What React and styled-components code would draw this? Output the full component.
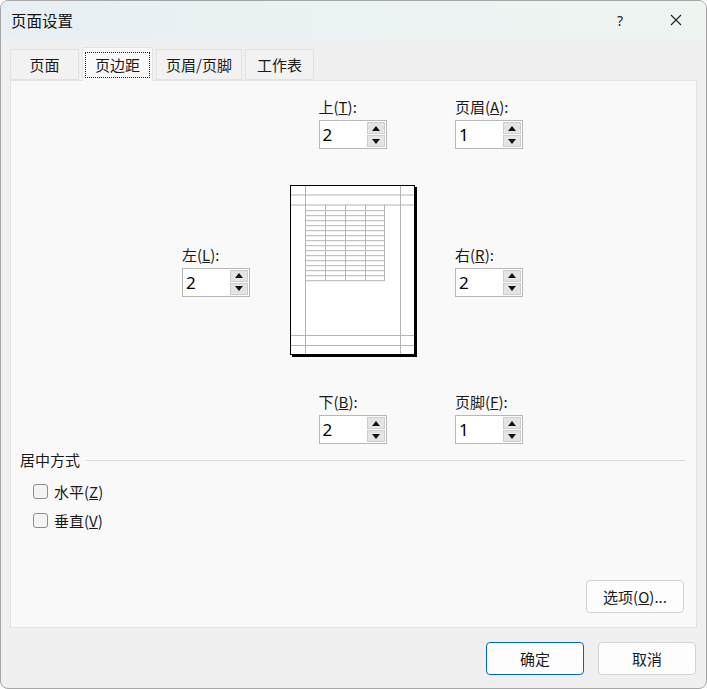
import styled, { createGlobalStyle } from "styled-components";

const Global = createGlobalStyle`
  html, body { margin: 0; padding: 0; background: #ffffff; }
  body { font-family: "Noto Sans CJK SC", "Noto Sans", sans-serif; color: #1a1a1a; }
`;

const Window = styled.div`
  width: 707px;
  height: 689px;
  box-sizing: border-box;
  border: 1px solid #a6a6a6;
  border-radius: 8px;
  overflow: hidden;
  background: #f0f0f0;
  display: flex;
  flex-direction: column;
  font-size: 15px;
`;

const TitleBar = styled.div`
  height: 38px;
  flex-shrink: 0;
  display: flex;
  align-items: center;
  padding: 0 2px 0 10px;
  background: linear-gradient(90deg, #e7eff4 0%, #ecf3f3 55%, #eef4f0 100%);
`;

const Title = styled.div`
  flex: 1;
  font-size: 15.5px;
  color: #111;
`;

const TitleButton = styled.div`
  width: 56px;
  height: 38px;
  display: flex;
  align-items: center;
  justify-content: center;
  font-family: "Noto Sans", sans-serif;
  font-size: 14px;
  color: #222;
`;

const TabStrip = styled.div`
  display: flex;
  align-items: flex-end;
  gap: 3px;
  padding: 9px 0 0 9px;
  height: 41px;
  box-sizing: border-box;
  position: relative;
  z-index: 1;
`;

const Tab = styled.div`
  width: ${(p) => p.$w}px;
  height: ${(p) => (p.$active ? 34 : 31)}px;
  box-sizing: border-box;
  display: flex;
  align-items: center;
  justify-content: center;
  border: 1px solid #e3e3e3;
  border-bottom: ${(p) => (p.$active ? "none" : "1px solid #e3e3e3")};
  background: ${(p) => (p.$active ? "#f9f9f9" : "#f2f2f2")};
  margin-bottom: ${(p) => (p.$active ? "-1px" : "0")};
  padding-top: ${(p) => (p.$active ? "1px" : "0")};
`;

const FocusBox = styled.span`
  border: 1px dotted #222;
  padding: 2px 9px;
  line-height: 20px;
`;

const Panel = styled.div`
  margin: 0 9px;
  height: 548px;
  box-sizing: border-box;
  border: 1px solid #e3e3e3;
  background: #f9f9f9;
  display: flex;
  flex-direction: column;
`;

const MarginGrid = styled.div`
  display: grid;
  grid-template-columns: 68px 125px 68px;
  column-gap: 40px;
  margin: 15px 0 0 171px;
`;

const Field = styled.div`
  display: flex;
  flex-direction: column;
  gap: 2px;
  grid-column: ${(p) => p.$col};
  justify-self: ${(p) => p.$justify || "start"};
  align-self: center;
  width: 68px;
`;

const Label = styled.label`
  line-height: 21px;
  white-space: nowrap;
`;

const Spin = styled.div`
  display: flex;
  height: 29px;
  margin-top: 1px;
  box-sizing: border-box;
  border: 1px solid #b7b7b7;
  background: #ffffff;
`;

const SpinValue = styled.div`
  flex: 1;
  padding-left: 3px;
  font-family: "Noto Sans", sans-serif;
  font-size: 17px;
  line-height: 27px;
  color: #000;
`;

const SpinButtons = styled.div`
  width: 18px;
  margin: 1px 1px 1px 0;
  display: flex;
  flex-direction: column;
  gap: 1px;
`;

const SpinButton = styled.div`
  flex: 1;
  background: #e4e4e4;
  border: 1px solid #cdcdcd;
  display: flex;
  align-items: center;
  justify-content: center;
  &::after {
    content: "";
    border-left: 4px solid transparent;
    border-right: 4px solid transparent;
    ${(p) => (p.$up ? "border-bottom: 5px solid #111;" : "border-top: 5px solid #111;")}
  }
`;

const PageCell = styled.div`
  grid-column: 2;
  margin: 36px 0 34px;
  width: 127px;
  height: 172px;
`;

const GroupHead = styled.div`
  display: flex;
  align-items: center;
  margin: 6px 11px 0 9px;
  line-height: 20px;
`;

const GroupRule = styled.div`
  flex: 1;
  height: 1px;
  background: #dcdcdc;
  margin-left: 6px;
`;

const CheckList = styled.div`
  display: flex;
  flex-direction: column;
  padding: 7px 0 0 22px;
`;

const CheckRow = styled.label`
  display: flex;
  align-items: center;
  gap: 6px;
  height: 29px;
`;

const Box = styled.span`
  width: 15px;
  height: 15px;
  box-sizing: border-box;
  border: 1px solid #8d8d8d;
  border-radius: 3px;
  background: #f4f4f4;
`;

const PanelFoot = styled.div`
  margin-top: auto;
  display: flex;
  justify-content: flex-end;
  padding: 0 12px 14px 0;
`;

const Button = styled.button`
  width: 98px;
  height: 33px;
  box-sizing: border-box;
  border: 1px solid ${(p) => (p.$primary ? "#0067c0" : "#d3d3d3")};
  border-radius: 4px;
  background: #fdfdfd;
  font-family: "Noto Sans CJK SC", "Noto Sans", sans-serif;
  font-size: 15px;
  color: #1a1a1a;
  padding: 0;
`;

const Footer = styled.div`
  display: flex;
  justify-content: flex-end;
  gap: 14px;
  padding: 14px 10px 0 0;
`;

const Spinner = ({ label, k, value, col, justify }) => (
  <Field $col={col} $justify={justify}>
    <Label>
      {label}(<u>{k}</u>):
    </Label>
    <Spin>
      <SpinValue>{value}</SpinValue>
      <SpinButtons>
        <SpinButton $up />
        <SpinButton />
      </SpinButtons>
    </Spin>
  </Field>
);

const PagePreview = () => {
  const rows = [];
  for (let i = 0; i < 15; i++) rows.push(25.7 + i * 5);
  const g = "#b4b4b4";
  return (
    <svg width="127" height="172" viewBox="0 0 127 172">
      <rect x="2" y="2" width="125" height="170" fill="#000" />
      <rect x="0.5" y="0.5" width="124" height="169" fill="#fff" stroke="#000" />
      <line x1="15.5" y1="1" x2="15.5" y2="169" stroke={g} />
      <line x1="110.5" y1="1" x2="110.5" y2="169" stroke={g} />
      <line x1="1" y1="10" x2="124" y2="10" stroke={g} />
      <line x1="1" y1="20" x2="124" y2="20" stroke={g} />
      <line x1="1" y1="150.5" x2="124" y2="150.5" stroke={g} />
      <line x1="1" y1="160.5" x2="124" y2="160.5" stroke={g} />
      {rows.map((y) => (
        <line key={y} x1="15.5" y1={y} x2="94.5" y2={y} stroke={g} />
      ))}
      {[35.5, 55.5, 75.5, 94.5].map((x) => (
        <line key={x} x1={x} y1="20" x2={x} y2="96" stroke={g} />
      ))}
    </svg>
  );
};

export default function App() {
  return (
    <>
      <Global />
      <Window>
        <TitleBar>
          <Title>页面设置</Title>
          <TitleButton>?</TitleButton>
          <TitleButton>
            <svg width="12" height="12" viewBox="0 0 12 12">
              <path d="M1 1 L11 11 M11 1 L1 11" stroke="#222" strokeWidth="1.1" />
            </svg>
          </TitleButton>
        </TitleBar>

        <TabStrip>
          <Tab $w={69}>页面</Tab>
          <Tab $w={71} $active>
            <FocusBox>页边距</FocusBox>
          </Tab>
          <Tab $w={86}>页眉/页脚</Tab>
          <Tab $w={69}>工作表</Tab>
        </TabStrip>

        <Panel>
          <MarginGrid>
            <Spinner label="上" k="T" value="2" col={2} justify="center" />
            <Spinner label="页眉" k="A" value="1" col={3} />
            <Spinner label="左" k="L" value="2" col={1} />
            <PageCell>
              <PagePreview />
            </PageCell>
            <Spinner label="右" k="R" value="2" col={3} />
            <Spinner label="下" k="B" value="2" col={2} justify="center" />
            <Spinner label="页脚" k="F" value="1" col={3} />
          </MarginGrid>

          <GroupHead>
            居中方式
            <GroupRule />
          </GroupHead>
          <CheckList>
            <CheckRow>
              <Box />
              <span>
                水平(<u>Z</u>)
              </span>
            </CheckRow>
            <CheckRow>
              <Box />
              <span>
                垂直(<u>V</u>)
              </span>
            </CheckRow>
          </CheckList>

          <PanelFoot>
            <Button>
              选项(<u>O</u>)...
            </Button>
          </PanelFoot>
        </Panel>

        <Footer>
          <Button $primary>确定</Button>
          <Button>取消</Button>
        </Footer>
      </Window>
    </>
  );
}
